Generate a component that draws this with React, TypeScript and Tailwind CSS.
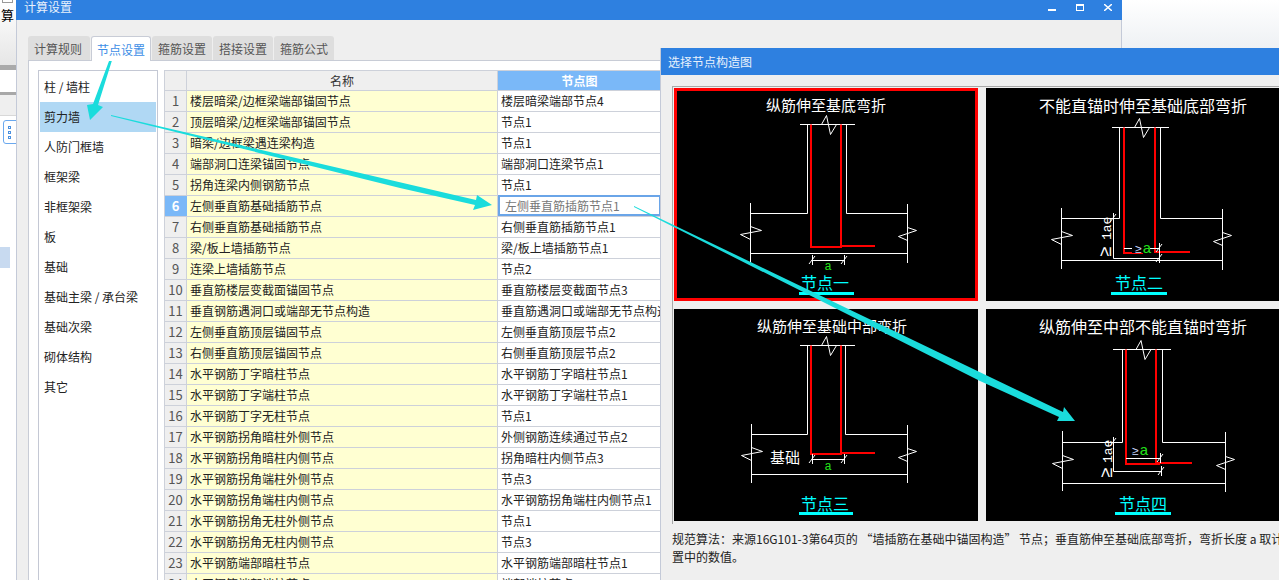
import React from "react";

const rows: [string, string][] = [
  ["楼层暗梁/边框梁端部锚固节点", "楼层暗梁端部节点4"],
  ["顶层暗梁/边框梁端部锚固节点", "节点1"],
  ["暗梁/边框梁遇连梁构造", "节点1"],
  ["端部洞口连梁锚固节点", "端部洞口连梁节点1"],
  ["拐角连梁内侧钢筋节点", "节点1"],
  ["左侧垂直筋基础插筋节点", "左侧垂直筋插筋节点1"],
  ["右侧垂直筋基础插筋节点", "右侧垂直筋插筋节点1"],
  ["梁/板上墙插筋节点", "梁/板上墙插筋节点1"],
  ["连梁上墙插筋节点", "节点2"],
  ["垂直筋楼层变截面锚固节点", "垂直筋楼层变截面节点3"],
  ["垂直钢筋遇洞口或端部无节点构造", "垂直筋遇洞口或端部无节点构造1"],
  ["左侧垂直筋顶层锚固节点", "左侧垂直筋顶层节点2"],
  ["右侧垂直筋顶层锚固节点", "右侧垂直筋顶层节点2"],
  ["水平钢筋丁字暗柱节点", "水平钢筋丁字暗柱节点1"],
  ["水平钢筋丁字端柱节点", "水平钢筋丁字端柱节点1"],
  ["水平钢筋丁字无柱节点", "节点1"],
  ["水平钢筋拐角暗柱外侧节点", "外侧钢筋连续通过节点2"],
  ["水平钢筋拐角暗柱内侧节点", "拐角暗柱内侧节点3"],
  ["水平钢筋拐角端柱外侧节点", "节点3"],
  ["水平钢筋拐角端柱内侧节点", "水平钢筋拐角端柱内侧节点1"],
  ["水平钢筋拐角无柱外侧节点", "节点1"],
  ["水平钢筋拐角无柱内侧节点", "节点3"],
  ["水平钢筋端部暗柱节点", "水平钢筋端部暗柱节点1"],
  ["水平钢筋端部端柱节点", "端部端柱节点1"],
];

const categories = ["柱 / 墙柱", "剪力墙", "人防门框墙", "框架梁", "非框架梁", "板", "基础", "基础主梁 / 承台梁", "基础次梁", "砌体结构", "其它"];
const tabs = ["计算规则", "节点设置", "箍筋设置", "搭接设置", "箍筋公式"];

const cjk = "font-['Noto_Sans_CJK_SC','Noto_Sans',sans-serif]";
const svgFont = "'Noto Sans CJK SC', sans-serif";

type D = {
  vb: string; w: number; h: number; title: string; tx: number; ty: number; ts: number;
  top: number; tx1: number; tx2: number; wl: number; wr: number; sh: number;
  ol: number; or: number; olt: number; ort: number; olb: number; orb: number; floor: number;
  rl: number; rr: number; rb: number; tail: number; tailY: number; rbEnd: number;
  label: string; lx: number; ly: number; ux1: number; ux2: number; uy: number;
  extra?: React.ReactNode;
};

function Tick({ x, y }: { x: number; y: number }) {
  return (
    <>
      <line x1={x - 3} y1={y + 4} x2={x + 3} y2={y - 4} stroke="#fff" />
      <line x1={x + 0.5} y1={y - 5} x2={x + 0.5} y2={y + 5} stroke="#fff" />
    </>
  );
}

function Green({ x, y, size = 12 }: { x: number; y: number; size?: number }) {
  return <text x={x} y={y} fill="#22e01a" fontSize={size} fontFamily="'Liberation Mono', monospace" textAnchor="middle">a</text>;
}

function Rotated({ x, y, gap }: { x: number; y: number; gap: number }) {
  return (
    <>
      <text x={x} y={y} fill="#fff" fontSize={13} fontFamily="'Liberation Mono', monospace" transform={`rotate(-90 ${x} ${y})`}>1ae</text>
      <text x={x} y={y + gap} fill="#fff" fontSize={18} fontFamily="'Liberation Mono', monospace" transform={`rotate(-90 ${x} ${y + gap})`}>≥</text>
    </>
  );
}

const diagrams: D[] = [
  {
    vb: "677 91 298 207", w: 298, h: 207, title: "纵筋伸至基底弯折", tx: 826, ty: 111, ts: 15,
    top: 124.5, tx1: 800, tx2: 855, wl: 807.5, wr: 846.5, sh: 213.5, ol: 750.5, or: 907.5, olt: 203, ort: 204, olb: 262, orb: 263, floor: 253.5,
    rl: 811, rr: 841, rb: 247, tail: 875, tailY: 246, rbEnd: 842,
    label: "节点一", lx: 825, ly: 289, ux1: 799, ux2: 854, uy: 292,
    extra: (
      <>
        <line x1={812} y1={260.5} x2={844} y2={260.5} stroke="#fff" />
        <Tick x={812} y={260} />
        <Tick x={844} y={260} />
        <Green x={828} y={270} />
      </>
    ),
  },
  {
    vb: "986 88 293 213", w: 293, h: 213, title: "不能直锚时伸至基础底部弯折", tx: 1143, ty: 112, ts: 16,
    top: 127.5, tx1: 1112, tx2: 1169, wl: 1119.5, wr: 1160.5, sh: 218.5, ol: 1061.5, or: 1222.5, olt: 208, ort: 209, olb: 269, orb: 270, floor: 260.5,
    rl: 1124, rr: 1155, rb: 253, tail: 1190, tailY: 252, rbEnd: 1143,
    label: "节点二", lx: 1139, ly: 289, ux1: 1111, ux2: 1167, uy: 292,
    extra: (
      <>
        <polyline points="1113.5,218 1113.5,258.5 1160,258.5" fill="none" stroke="#fff" />
        <line x1={1124} y1={248.5} x2={1160} y2={248.5} stroke="#fff" />
        <Tick x={1159} y={258} />
        <Tick x={1159} y={248} />
        <Tick x={1113} y={218} />
        <rect x={1132} y={243} width={18} height={10} fill="#000" />
        <text x={1138} y={253} fill="#c8d8ff" fontSize={12} textAnchor="middle" fontFamily="'Liberation Mono', monospace">≥</text>
        <Green x={1147} y={253} size={15} />
        <Rotated x={1111} y={240} gap={17} />
      </>
    ),
  },
  {
    vb: "674 309 304 212", w: 304, h: 212, title: "纵筋伸至基础中部弯折", tx: 832, ty: 332, ts: 15,
    top: 345.5, tx1: 800, tx2: 855, wl: 807.5, wr: 845.5, sh: 434.5, ol: 751.5, or: 907.5, olt: 424, ort: 425, olb: 483, orb: 483, floor: 474.5,
    rl: 811, rr: 841, rb: 454, tail: 875, tailY: 453, rbEnd: 842,
    label: "节点三", lx: 825, ly: 510, ux1: 799, ux2: 853, uy: 512,
    extra: (
      <>
        <line x1={812} y1={459.5} x2={844} y2={459.5} stroke="#fff" />
        <Tick x={812} y={459} />
        <Tick x={844} y={459} />
        <Green x={828} y={470} />
        <text x={770} y={463} fill="#fff" fontSize={15} fontFamily={svgFont}>基础</text>
      </>
    ),
  },
  {
    vb: "986 309 293 212", w: 293, h: 212, title: "纵筋伸至中部不能直锚时弯折", tx: 1143, ty: 333, ts: 16,
    top: 349.5, tx1: 1113, tx2: 1171, wl: 1122.5, wr: 1162.5, sh: 442.5, ol: 1062.5, or: 1225.5, olt: 431, ort: 432, olb: 491, orb: 492, floor: 483.5,
    rl: 1126, rr: 1156, rb: 464, tail: 1192, tailY: 463, rbEnd: 1160,
    label: "节点四", lx: 1143, ly: 510, ux1: 1115, ux2: 1171, uy: 512,
    extra: (
      <>
        <polyline points="1113.5,442 1113.5,471.5 1161,471.5" fill="none" stroke="#fff" />
        <line x1={1126} y1={458.5} x2={1160} y2={458.5} stroke="#fff" />
        <Tick x={1160} y={458} />
        <Tick x={1161} y={471} />
        <Tick x={1113} y={442} />
        <text x={1135} y={455} fill="#c8d8ff" fontSize={12} textAnchor="middle" fontFamily="'Liberation Mono', monospace">≥</text>
        <Green x={1144} y={455} size={15} />
        <Rotated x={1112} y={463} gap={15} />
      </>
    ),
  },
];

function Diagram({ d }: { d: D }) {
  const mid = (d.tx1 + d.tx2) / 2;
  const lb = d.sh + 17;
  return (
    <svg viewBox={d.vb} width={d.w} height={d.h} className="block bg-black">
      <text x={d.tx} y={d.ty} fill="#fff" fontSize={d.ts} fontFamily={svgFont} textAnchor="middle">{d.title}</text>
      <g fill="none" stroke="#fff" strokeWidth={1}>
        <line x1={d.tx1} y1={d.top} x2={d.tx2} y2={d.top} />
        <polyline points={`${mid - 6},${d.top} ${mid - 1},${d.top - 9} ${mid + 3},${d.top + 10} ${mid + 9},${d.top}`} />
        <polyline points={`${d.wl},${d.top} ${d.wl},${d.sh} ${d.ol},${d.sh}`} />
        <polyline points={`${d.wr},${d.top} ${d.wr},${d.sh} ${d.or},${d.sh}`} />
        <line x1={d.ol} y1={d.olt} x2={d.ol} y2={d.olb} />
        <line x1={d.or} y1={d.ort} x2={d.or} y2={d.orb} />
        <line x1={d.ol} y1={d.floor} x2={d.or} y2={d.floor} />
        <polyline points={`${d.ol},${lb - 4} ${d.ol + 11},${lb} ${d.ol - 10},${lb + 4} ${d.ol},${lb + 9}`} />
        <polyline points={`${d.or},${lb - 3} ${d.or + 9},${lb} ${d.or - 9},${lb + 6} ${d.or},${lb + 10}`} />
      </g>
      <g stroke="#ff0000" strokeWidth={2} fill="none">
        <line x1={d.rl} y1={d.top} x2={d.rl} y2={d.rb + 1} />
        <line x1={d.rr} y1={d.top} x2={d.rr} y2={d.tailY + 1} />
        <line x1={d.rl} y1={d.rb} x2={d.rbEnd} y2={d.rb} />
        <line x1={d.rr} y1={d.tailY} x2={d.tail} y2={d.tailY} />
      </g>
      {d.extra}
      <text x={d.lx} y={d.ly} fill="#00ffff" fontSize={16} fontFamily={svgFont} textAnchor="middle">{d.label}</text>
      <rect x={d.ux1} y={d.uy} width={d.ux2 - d.ux1} height={3} fill="#00ffff" />
    </svg>
  );
}

export default function App() {
  return (
    <div className={`relative w-[1279px] h-[580px] overflow-hidden bg-white text-[12px] text-[#222] ${cjk}`}>
      <div className="flex h-full">
        {/* Main window behind, left edge */}
        <div className="w-[16px] h-full shrink-0 flex flex-col overflow-hidden">
          <div className="h-[65px] shrink-0 bg-gradient-to-b from-white to-[#e6e6e6] overflow-hidden">
            <div className="h-[3px] w-[11px] ml-[2px] border border-t-0 border-[#999999]" />
            <div className="pt-[3px] pl-px leading-[18px] text-[13px] text-black whitespace-nowrap">算</div>
          </div>
          <div className="h-[5px] shrink-0 bg-[#aaaaaa]" />
          <div className="h-[22px] shrink-0 bg-white" />
          <div className="h-[3px] shrink-0 bg-[#a8a8a8]" />
          <div className="h-[20px] shrink-0 bg-[#efefef]" />
          <div className="h-[132px] shrink-0 bg-white pt-[4px] pl-[3px] border-t border-[#d8d8d8]">
            <div className="w-[16px] h-[24px] rounded-[3px] border border-[#6aa8ee] flex flex-col gap-[2px] justify-center pl-[4px]">
              <span className="block w-[3px] h-[3px] border border-[#4a90e0]" />
              <span className="block w-[3px] h-[3px] border border-[#4a90e0]" />
              <span className="block w-[3px] h-[3px] border border-[#4a90e0]" />
            </div>
          </div>
          <div className="h-[21px] shrink-0 bg-[#c8daf0] mr-[6px]" />
          <div className="flex-1 bg-white" />
        </div>

        {/* 计算设置 window */}
        <div className="w-[1106px] h-full shrink-0 flex flex-col bg-[#efefef] border-l border-r border-[#c4cad8]">
          <div className="h-[20px] shrink-0 -mx-px bg-[#2e80e0] text-[#e8f1fc] flex items-start justify-between pl-[8px] pr-[10px] pt-px leading-[12px]">
            <span>计算设置</span>
            <div className="flex items-start gap-[20px] pt-[3px]">
              <span className="block w-[8px] h-[2px] mt-[5px] bg-white" />
              <span className="block w-[8px] h-[7px] border border-white border-t-2" />
              <svg width="8" height="7" viewBox="0 0 8 7" className="block" stroke="#fff" strokeWidth="1.4"><path d="M0 0 L8 7 M8 0 L0 7" /></svg>
            </div>
          </div>
          <div className="flex items-end gap-px pl-[11px] pt-[15px] h-[40px] shrink-0">
            {tabs.map((t, i) => (
              <div
                key={t}
                className={
                  i === 1
                    ? "w-[60px] h-[25px] -mb-px z-10 flex items-center justify-center pt-[2px] rounded-t-[3px] bg-white border border-b-0 border-[#c8ccd6] text-[#3d8ee6]"
                    : i === 0
                      ? "w-[62px] h-[24px] flex items-center justify-center pt-[2px] pr-[2px] rounded-t-[3px] bg-[#dedede] text-[#555]"
                      : "w-[60px] h-[24px] flex items-center justify-center pt-[2px] rounded-t-[3px] bg-[#dedede] text-[#555]"
                }
              >
                {t}
              </div>
            ))}
          </div>
          <div className="ml-[11px] mr-px flex-1 min-h-0 flex gap-[6px] bg-white border-t border-l border-[#c8ccd6] pl-[9px] pt-[9px] overflow-hidden">
            <div className="w-[120px] shrink-0 h-[520px] border border-[#c4c8d4] p-px">
              {categories.map((c, i) => (
                <div key={c} className={`h-[30px] flex items-center pl-[4px] text-[#222] ${i === 1 ? "bg-[#b0d8f4]" : ""}`}>{c}</div>
              ))}
            </div>
            <div className="w-[497px] shrink-0 border-t border-l border-[#cdd1da]">
              <div className="grid grid-cols-[22px_311px_163px] h-[20px] border-b border-[#cdd1da]">
                <div className="bg-[#efefef] border-r border-[#cdd1da]" />
                <div className="bg-[#efefef] border-r border-[#cdd1da] flex items-center justify-center text-[#333]">名称</div>
                <div className="bg-[#7ab8f8] flex items-center justify-center text-white font-bold">节点图</div>
              </div>
              {rows.map(([a, b], i) => (
                <div key={i} className="grid grid-cols-[22px_311px_163px] h-[21px] border-b border-[#cdd1da]">
                  <div className={`border-r flex items-center justify-center text-[13px] ${i === 5 ? "bg-[#7ab8f8] text-white font-bold border-[#7ab8f8]" : "bg-[#efefef] text-[#555] border-[#cdd1da]"}`}>{i + 1}</div>
                  <div className="bg-[#ffffd2] border-r border-[#cdd1da] flex items-center pl-[3px] text-[#222] whitespace-nowrap">{a}</div>
                  {i === 5 ? (
                    <div className="bg-white border-2 border-[#6aa5e8] -mt-px flex items-center pl-[5px] text-[#777] whitespace-nowrap overflow-hidden">{b}</div>
                  ) : (
                    <div className="bg-white flex items-center pl-[3px] text-[#222] whitespace-nowrap overflow-hidden">{b}</div>
                  )}
                </div>
              ))}
            </div>
          </div>
        </div>

        <div className="flex-1 h-[48px] bg-gradient-to-b from-white to-[#eef1f4]" />
      </div>

      {/* 选择节点构造图 window */}
      <div className="absolute left-[660px] top-[48px] w-[619px] h-[532px] bg-[#efefef] border-l border-[#c4cad8] flex flex-col overflow-hidden">
        <div className="h-[27px] shrink-0 -ml-px bg-[#2e80e0] text-[#e8f1fc] flex items-center pl-[8px]">选择节点构造图</div>
        <div className="pl-[11px] pt-[11px]">
          <div className="w-[640px] h-[438px] border-t border-l border-[#a9a9a9] pl-px pt-px">
            <div className="grid grid-cols-[304px_293px] gap-x-[8px] gap-y-[8px]">
              <div className="h-[213px] border-[3px] border-[#ff0000]"><Diagram d={diagrams[0]} /></div>
              <div className="h-[213px]"><Diagram d={diagrams[1]} /></div>
              <div className="h-[212px]"><Diagram d={diagrams[2]} /></div>
              <div className="h-[212px]"><Diagram d={diagrams[3]} /></div>
            </div>
          </div>
        </div>
        <p className="pl-[11px] pt-[6px] w-[760px] leading-[18px] text-[12px] text-[#222] whitespace-nowrap">
          规范算法：来源16G101-3第64页的 “墙插筋在基础中锚固构造” 节点；垂直筋伸至基础底部弯折，弯折长度 a 取计算设
          <br />
          置中的数值。
        </p>
      </div>

      {/* Hand-drawn annotation arrows */}
      <svg className="absolute inset-0 pointer-events-none" width="1279" height="580" viewBox="0 0 1279 580">
        <g fill="#1adcdc">
          <polygon points="112,53 114,54 98,105 103,107 90,120 87,105 93,104" />
          <polygon points="111,115 476,200 477,195 492,205 473,210 475,205 400,188 111,116" />
          <polygon points="634,206 1063,412 1064,407 1075,421 1057,421 1059,417 980,381 634,207" />
        </g>
      </svg>
    </div>
  );
}
